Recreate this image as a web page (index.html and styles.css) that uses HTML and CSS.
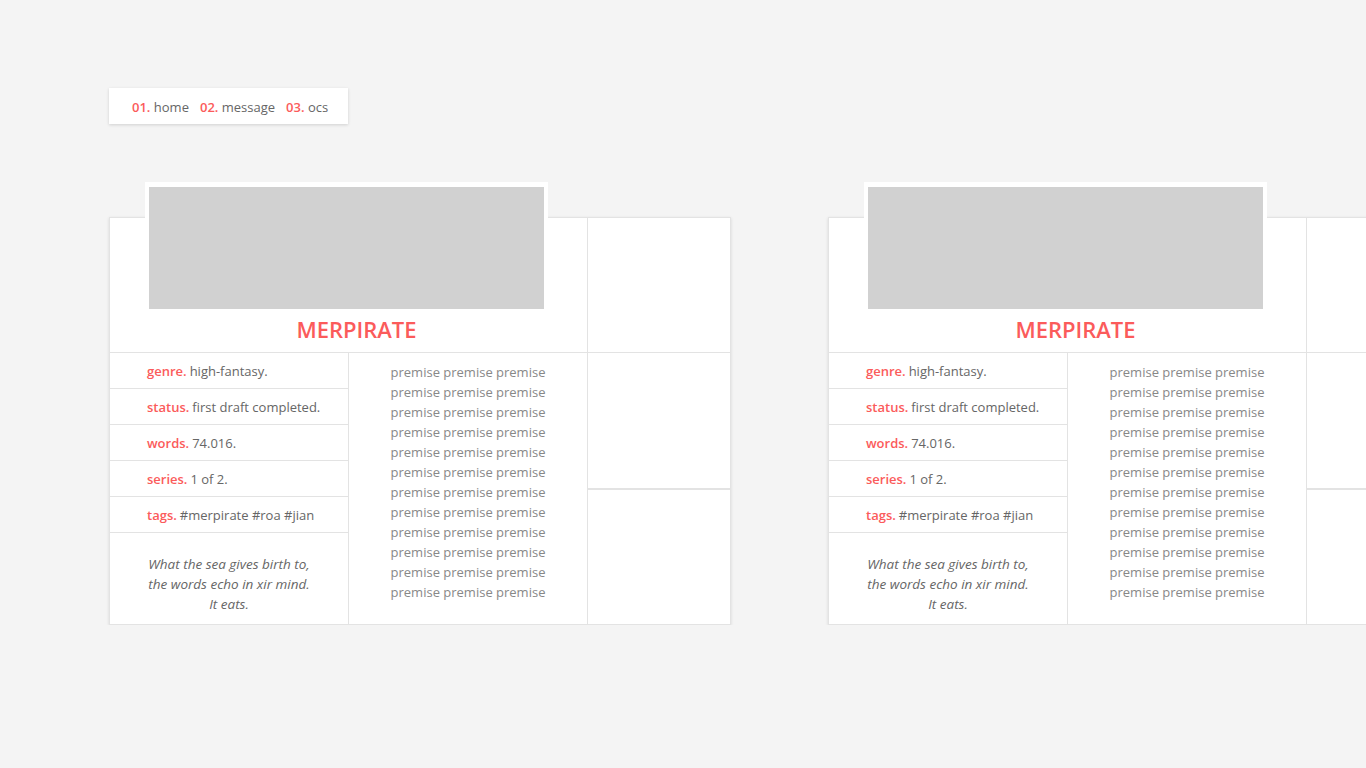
FILE: index.html
```html
<!DOCTYPE html>
<html lang="en">
<head>
  <meta charset="UTF-8">
  <meta name="viewport" content="width=device-width, initial-scale=1.0">
  <title>ocs</title>
  <link rel="stylesheet" href="styles.css">
</head>
<body>
  <div class="page">
    <nav class="menu">
      <a href="#"><b>01.</b> home</a>
      <a href="#"><b>02.</b> message</a>
      <a href="#"><b>03.</b> ocs</a>
    </nav>

    <main class="shelf">
      <article class="book">
        <div class="book-head">
          <div class="cover"><div class="cover-img"></div></div>
          <h2>MERPIRATE</h2>
        </div>
        <div class="side"></div>
        <ul class="facts">
          <li><b>genre.</b> high-fantasy.</li>
          <li><b>status.</b> first draft completed.</li>
          <li><b>words.</b> 74.016.</li>
          <li><b>series.</b> 1 of 2.</li>
          <li><b>tags.</b> #merpirate #roa #jian</li>
          <li class="quote">What the sea gives birth to,<br>the words echo in xir mind.<br>It eats.</li>
        </ul>
        <div class="premise">
          <p>premise premise premise premise premise premise premise premise premise premise premise premise premise premise premise premise premise premise premise premise premise premise premise premise premise premise premise premise premise premise premise premise premise premise premise premise</p>
        </div>
        <div class="side-stack">
          <div class="side"></div>
          <div class="side"></div>
        </div>
      </article>

      <article class="book">
        <div class="book-head">
          <div class="cover"><div class="cover-img"></div></div>
          <h2>MERPIRATE</h2>
        </div>
        <div class="side"></div>
        <ul class="facts">
          <li><b>genre.</b> high-fantasy.</li>
          <li><b>status.</b> first draft completed.</li>
          <li><b>words.</b> 74.016.</li>
          <li><b>series.</b> 1 of 2.</li>
          <li><b>tags.</b> #merpirate #roa #jian</li>
          <li class="quote">What the sea gives birth to,<br>the words echo in xir mind.<br>It eats.</li>
        </ul>
        <div class="premise">
          <p>premise premise premise premise premise premise premise premise premise premise premise premise premise premise premise premise premise premise premise premise premise premise premise premise premise premise premise premise premise premise premise premise premise premise premise premise</p>
        </div>
        <div class="side-stack">
          <div class="side"></div>
          <div class="side"></div>
        </div>
      </article>
    </main>
  </div>
</body>
</html>
```

FILE: styles.css
```css
body {
  margin: 0;
  background-color: #f4f4f4;
  font-family: "Open Sans", "Liberation Sans", sans-serif;
  color: #666;
  overflow-x: hidden;
}
.page {
  padding: 88px 0 0 109px;
}
.menu {
  display: flex;
  gap: 11px;
  width: 239px;
  height: 36px;
  box-sizing: border-box;
  align-items: center;
  padding: 2px 0 0 23px;
  background-color: #fff;
  box-shadow: 0 1px 3px rgba(0, 0, 0, 0.15);
  font-size: 13px;
}
.menu a {
  color: #666;
  text-decoration: none;
  white-space: nowrap;
}
.menu b,
.facts b {
  color: #fb5b5b;
  font-weight: 600;
}
.shelf {
  display: flex;
  gap: 97px;
  margin-top: 93px;
}
.book {
  flex-shrink: 0;
  display: grid;
  grid-template-columns: 238px 238px 142px;
  grid-template-rows: 134px 271px;
  gap: 1px;
  background-color: #e3e3e3;
  border: 1px solid #e3e3e3;
  box-shadow: 0 1px 3px rgba(0, 0, 0, 0.12);
}
.book-head {
  grid-column: 1 / 3;
  background-color: #fff;
  display: flex;
  flex-direction: column;
  align-items: center;
}
.cover {
  margin: -36px 0 0 -4px;
  width: 403px;
  box-sizing: border-box;
  padding: 5px 4px 4px;
  background-color: #fff;
}
.cover-img {
  height: 122px;
  background-color: #d1d1d1;
}
.book-head h2 {
  margin: 3px 0 0 16px;
  font-size: 22px;
  line-height: 26px;
  font-weight: 600;
  color: #fb5b5b;
}
.side {
  background-color: #fff;
}
.facts {
  list-style: none;
  margin: 0;
  padding: 0;
  background-color: #fff;
  font-size: 13px;
}
.facts li {
  height: 35px;
  display: flex;
  align-items: center;
  padding: 1px 0 0 37px;
  box-sizing: border-box;
  height: 36px;
  border-bottom: 1px solid #e3e3e3;
  white-space: nowrap;
}
.facts li b {
  margin-right: 3px;
}
.facts .quote {
  display: block;
  height: auto;
  border-bottom: none;
  padding: 21px 0 0;
  text-align: center;
  font-style: italic;
  line-height: 20px;
  font-size: 13.5px;
}
.premise {
  background-color: #fff;
  padding-top: 9px;
}
.premise p {
  width: 168px;
  margin: 0 auto;
  text-align: center;
  font-size: 13px;
  line-height: 20px;
  color: #888;
}
.side-stack {
  display: flex;
  flex-direction: column;
  gap: 2px;
}
.side-stack .side {
  flex: 1;
}
```
